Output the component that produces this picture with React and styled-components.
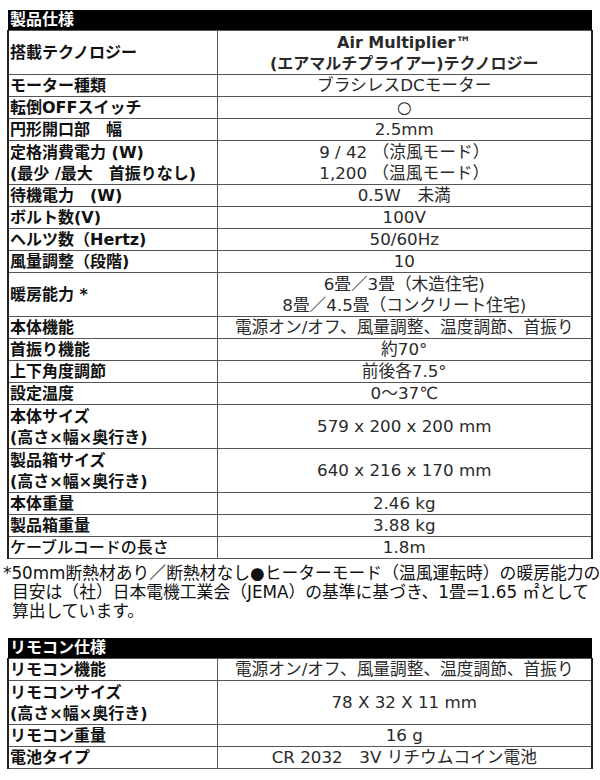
import React from 'react';
import styled, { createGlobalStyle } from 'styled-components';

const GlobalStyle = createGlobalStyle`
  body {
    margin: 0;
    background: #fff;
    font-family: "DejaVu Sans", "Noto Sans CJK JP", sans-serif;
  }
`;

const Page = styled.div`
  width: 600px;
  height: 780px;
  padding-top: 10px;
  box-sizing: border-box;
  overflow: hidden;
`;

const Table = styled.table`
  margin-left: 7px;
  width: 586px;
  border-collapse: collapse;
  table-layout: fixed;
  font-size: 16px;
  col.label {
    width: 209px;
  }
`;

const HeadCell = styled.th`
  background: #000;
  color: #fff;
  text-align: left;
  font-weight: bold;
  height: 20px;
  line-height: 20px;
  padding: 0 2px;
  font-size: 16px;
`;

const Label = styled.th`
  text-align: left;
  font-weight: ${props => (props.light ? 500 : 'bold')};
  color: #111;
  border: 1px solid #555;
  border-left: 2px solid #222;
  padding: 0 1px;
  line-height: 21px;
  height: ${props => props.lines * 22 - 1}px;
  white-space: nowrap;
`;

const Value = styled.td`
  text-align: center;
  color: #2a2a2a;
  border: 1px solid #555;
  border-right: 2px solid #222;
  line-height: 21px;
  padding: 0;
  font-size: ${props => (props.bold ? 16 : 16.7)}px;
  font-weight: ${props => (props.bold ? 'bold' : 'normal')};
  white-space: nowrap;
`;

const Note = styled.p`
  margin: 5px 0 17px 3px;
  padding-left: 9px;
  text-indent: -9px;
  font-size: 16.8px;
  line-height: 19px;
  color: #111;
  white-space: nowrap;
`;

const specRows = [
  { label: ['搭載テクノロジー'], value: ['Air Multiplier™', '(エアマルチプライアー)テクノロジー'], lines: 2, bold: true },
  { label: ['モーター種類'], value: ['ブラシレスDCモーター'] },
  { label: ['転倒OFFスイッチ'], value: ['○'] },
  { label: ['円形開口部　幅'], value: ['2.5mm'] },
  { label: ['定格消費電力 (W)', '(最少 /最大　首振りなし)'], value: ['9 / 42 （涼風モード）', '1,200 （温風モード）'], lines: 2 },
  { label: ['待機電力　(W)'], value: ['0.5W　未満'] },
  { label: ['ボルト数(V)'], value: ['100V'] },
  { label: ['ヘルツ数（Hertz)'], value: ['50/60Hz'] },
  { label: ['風量調整（段階)'], value: ['10'] },
  { label: ['暖房能力 *'], value: ['6畳／3畳（木造住宅)', '8畳／4.5畳（コンクリート住宅)'], lines: 2 },
  { label: ['本体機能'], value: ['電源オン/オフ、風量調整、温度調節、首振り'] },
  { label: ['首振り機能'], value: ['約70°'] },
  { label: ['上下角度調節'], value: ['前後各7.5°'] },
  { label: ['設定温度'], value: ['0〜37℃'] },
  { label: ['本体サイズ', '(高さ×幅×奥行き)'], value: ['579 x 200 x 200 mm'], lines: 2 },
  { label: ['製品箱サイズ', '(高さ×幅×奥行き)'], value: ['640 x 216 x 170 mm'], lines: 2 },
  { label: ['本体重量'], value: ['2.46 kg'] },
  { label: ['製品箱重量'], value: ['3.88 kg'] },
  { label: ['ケーブルコードの長さ'], value: ['1.8m'], light: true },
];

const remoteRows = [
  { label: ['リモコン機能'], value: ['電源オン/オフ、風量調整、温度調節、首振り'] },
  { label: ['リモコンサイズ', '(高さ×幅×奥行き)'], value: ['78 X 32 X 11 mm'], lines: 2 },
  { label: ['リモコン重量'], value: ['16 g'] },
  { label: ['電池タイプ'], value: ['CR 2032　3V リチウムコイン電池'] },
];

const Lines = ({ items }) =>
  items.map((t, i) => (
    <React.Fragment key={i}>
      {i > 0 && <br />}
      {t}
    </React.Fragment>
  ));

const SpecTable = ({ title, rows }) => (
  <Table>
    <colgroup>
      <col className="label" />
      <col />
    </colgroup>
    <thead>
      <tr>
        <HeadCell colSpan={2}>{title}</HeadCell>
      </tr>
    </thead>
    <tbody>
      {rows.map((row, i) => (
        <tr key={i}>
          <Label lines={row.lines || 1} light={row.light}>
            <Lines items={row.label} />
          </Label>
          <Value bold={row.bold}>
            <Lines items={row.value} />
          </Value>
        </tr>
      ))}
    </tbody>
  </Table>
);

const App = () => (
  <Page>
    <GlobalStyle />
    <SpecTable title="製品仕様" rows={specRows} />
    <Note>
      *50mm断熱材あり／断熱材なし●ヒーターモード（温風運転時）の暖房能力の
      <br />
      目安は（社）日本電機工業会（JEMA）の基準に基づき、1畳=1.65 ㎡として
      <br />
      算出しています。
    </Note>
    <SpecTable title="リモコン仕様" rows={remoteRows} />
  </Page>
);

export default App;
